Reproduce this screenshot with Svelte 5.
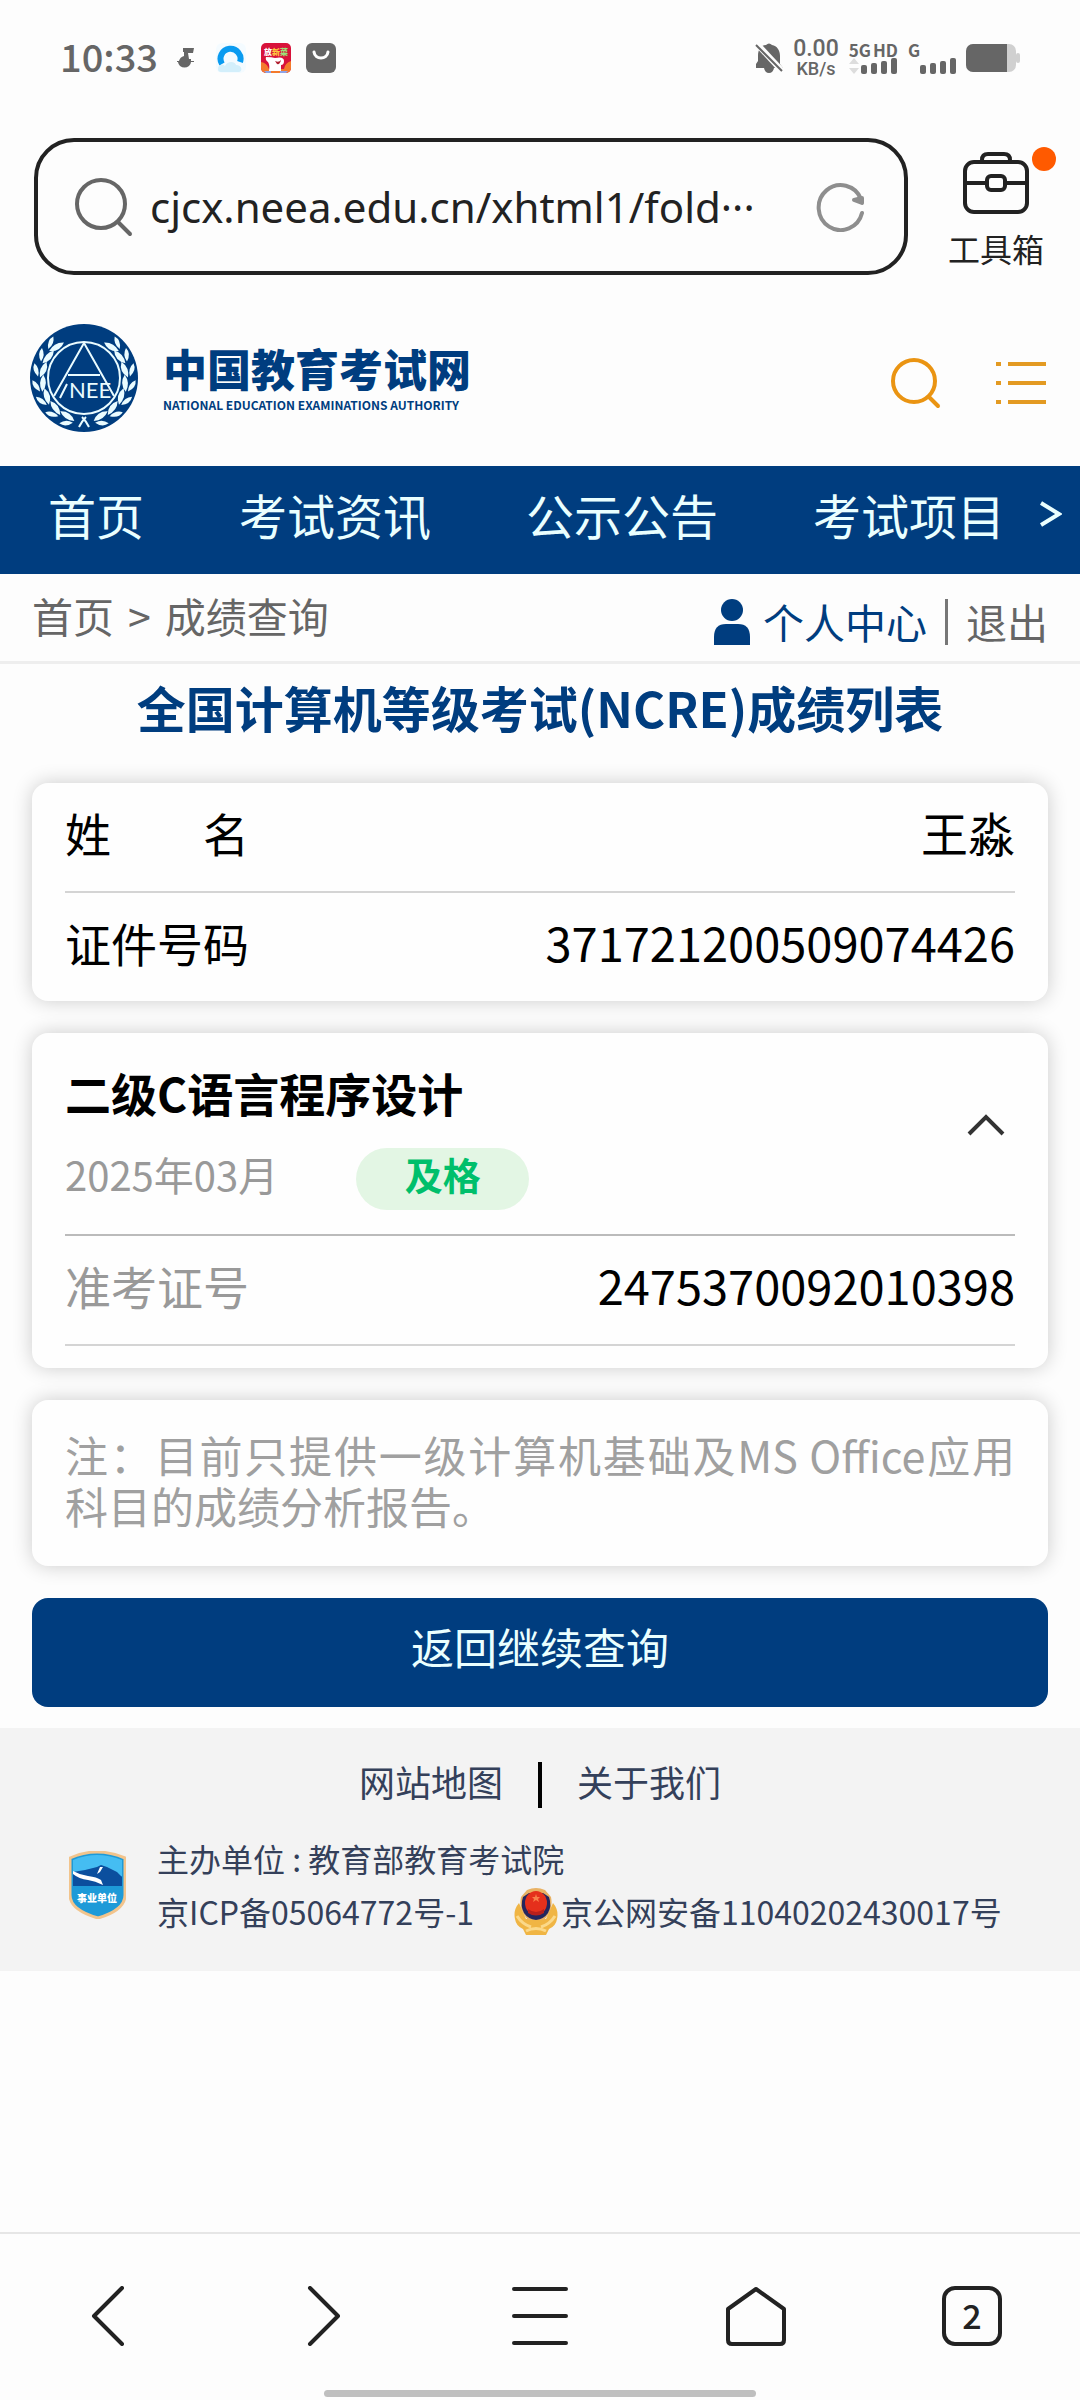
<script>
  let url = $state('cjcx.neea.edu.cn/xhtml1/fold···');
  let open = $state(true);

  const nav = ['首页', '考试资讯', '公示公告', '考试项目'];
  const person = [
    { label: '姓　　名', value: '王淼' },
    { label: '证件号码', value: '371721200509074426' }
  ];
  const exam = {
    name: '二级C语言程序设计',
    date: '2025年03月',
    result: '及格',
    ticket: '2475370092010398'
  };
  const bars = [9, 11, 13, 16];

  // laurel leaves, one angle per pair, measured from the bottom of the emblem
  const leaves = [14, 34, 54, 73, 92, 111, 129];
</script>

{#snippet signal()}
  <svg width="36" height="16" viewBox="0 0 36 16">
    {#each bars as h, i}
      <rect x={i * 10} y={16 - h} width="6" height={h} rx="2" fill="#666" />
    {/each}
  </svg>
{/snippet}

{#snippet laurel()}
  {#each leaves as a}
    <g transform="rotate({a} 54 54)">
      <path d="M55 98 Q49 89 39 92 Q45 100 55 98z" />
      <path d="M54 100 Q46 98 41 104 Q48 107 54 100z" />
    </g>
  {/each}
{/snippet}

<div class="screen">
  <div class="status">
    <div class="status-left">
      <span class="time">10:33</span>
      <svg width="18" height="22" viewBox="0 0 18 22" fill="#666">
        <path d="M6 1h11l-1 5h-5l1 6h2v2h3v1h-3a6 6 0 0 1-2 4 7 6 0 0 1-9 0 7 7 0 0 1-2-4H0v-1h2q1-4 5-5V5H6z" />
      </svg>
      <svg class="browser" width="30" height="30" viewBox="0 0 30 30">
        <rect width="30" height="30" rx="6" fill="#f4fbff" />
        <path d="M6 21a10 10 0 1 1 18-2" fill="none" stroke="#0a9bf0" stroke-width="6" />
        <path d="M2 26c0-5 5-5 7-3 2-5 10-5 11-1 6 0 7 6 3 7H5c-2 0-3-1-3-3z" fill="#d3effb" />
      </svg>
      <svg width="30" height="30" viewBox="0 0 30 30">
        <rect width="30" height="30" rx="5" fill="#d8123a" />
        <path d="M0 19q6 1 8 7h15q1-6 7-8v7a5 5 0 0 1-5 5H5a5 5 0 0 1-5-5z" fill="#f47a2c" />
        <text x="15" y="12" text-anchor="middle" font-size="8" font-weight="900" fill="#fff">放<tspan fill="#ffc83d">新</tspan><tspan fill="#9be27a">菜</tspan></text>
        <path d="M5 14q6 0 9 1 9-2 9 3 0 4-3 4v6H8q1-6-1-9-3-2-2-5z" fill="#fff" />
        <path d="M14 18q4 2 6-1-1 5-4 4z" fill="#b02030" />
        <path d="M3 28h7v2H5zM19 28h8l-2 2h-6z" fill="#8ea4e8" />
      </svg>
      <svg width="30" height="30" viewBox="0 0 30 30">
        <rect width="30" height="30" rx="6" fill="#666" />
        <path d="M8 9c1 8 13 8 14 0" fill="none" stroke="#fff" stroke-width="3" stroke-linecap="round" />
      </svg>
    </div>
    <div class="status-right">
      <svg width="28" height="32" viewBox="0 0 28 32">
        <path d="M3 14C3 6 7 3 11 3q3-3 6 0c5 1 8 5 8 11v8l3 4H19q-1 5-5 5t-5-5H1v-4l2-3z" fill="#666" />
        <path d="M1 1l27 29" stroke="#fdfdfd" stroke-width="6" />
        <path d="M1 3l26 26" stroke="#666" stroke-width="2" />
      </svg>
      <div class="speed"><span>0.00</span><span class="unit">KB/s</span></div>
      <div class="net">
        <div class="net-row labels"><span>5G</span><span>HD</span></div>
        <div class="net-row">
          <svg width="10" height="16" viewBox="0 0 10 16" fill="#ddd"><path d="M5 0l5 6H0zM5 16l5-6H0z" /></svg>
          {@render signal()}
        </div>
      </div>
      <div class="net second"><span>G</span><div class="net-row end">{@render signal()}</div></div>
      <svg width="54" height="28" viewBox="0 0 54 28">
        <rect x="0" y="0" width="50" height="28" rx="7" fill="#d0d0d0" />
        <rect x="50" y="9" width="4" height="10" rx="2" fill="#d0d0d0" />
        <path d="M7 0h34v28H7a7 7 0 0 1-7-7V7a7 7 0 0 1 7-7z" fill="#666" />
      </svg>
    </div>
  </div>

  <div class="toolbar">
    <div class="address">
      <svg width="58" height="60" viewBox="0 0 58 60" fill="none" stroke="#666" stroke-width="4" stroke-linecap="round">
        <circle cx="26" cy="27" r="24" />
        <path d="M43 45l12 12" />
      </svg>
      <input type="text" aria-label="网址" bind:value={url} />
      <button class="plain" aria-label="刷新">
        <svg width="50" height="50" viewBox="0 0 50 50" fill="none" stroke="#8e8e8e" stroke-width="4" stroke-linecap="round" stroke-linejoin="round">
          <path d="M46 31A22 22.500 0 1 1 45 17" />
          <path d="M38 18l8 3V16z" fill="#8e8e8e" />
        </svg>
      </button>
    </div>
    <button class="plain toolbox">
      <span class="toolbox-icon">
        <svg width="66" height="62" viewBox="0 0 66 62" fill="none" stroke="#222" stroke-width="4">
          <path d="M19 10V8q0-6 6-6h16q6 0 6 6v2" />
          <rect x="2" y="10" width="62" height="50" rx="9" />
          <path d="M2 31h21M43 31h21" />
          <rect x="24" y="24" width="18" height="14" rx="4" />
        </svg>
        <i class="dot"></i>
      </span>
      工具箱
    </button>
  </div>

  <header>
    <svg class="emblem" width="108" height="108" viewBox="0 0 108 108">
      <circle cx="54" cy="54" r="54" fill="#003d7f" />
      <g fill="#eafcff">
        {@render laurel()}
        <g transform="matrix(-1 0 0 1 108 0)">{@render laurel()}</g>
      </g>
      <g fill="none" stroke="#eafcff" stroke-width="2">
        <circle cx="54" cy="54" r="36" />
        <path d="M49 103q3-6 7-10M59 103q-3-6-7-10" />
        <path d="M24 72L54 19l30 53M30 74L37 60M38 51h32" />
      </g>
      <text class="initials" x="60" y="74" text-anchor="middle">NEE</text>
    </svg>
    <div class="brand">
      <h1>中国教育考试网</h1>
      <p>NATIONAL EDUCATION EXAMINATIONS AUTHORITY</p>
    </div>
    <button class="plain" aria-label="搜索">
      <svg width="50" height="52" viewBox="0 0 50 52" fill="none" stroke="#ea9412" stroke-width="4" stroke-linecap="round">
        <circle cx="23" cy="24" r="21" />
        <path d="M38 40l9 9" />
      </svg>
    </button>
    <button class="plain" aria-label="菜单">
      <svg width="50" height="44" viewBox="0 0 50 44" stroke="#e39a22" stroke-width="4">
        <path d="M0 3h5M0 22h5M0 41h5M12 3h38M12 22h38M12 41h38" />
      </svg>
    </button>
  </header>

  <nav class="main-nav">
    {#each nav as item}
      <a href="#top">{item}</a>
    {/each}
    <button class="plain" aria-label="更多">
      <svg width="22" height="26" viewBox="0 0 22 26" fill="none" stroke="#eaffff" stroke-width="4"><path d="M1 2l18 11L1 24" /></svg>
    </button>
  </nav>

  <div class="crumbs">
    <div class="path"><a href="#top">首页</a><span>&gt;</span><a href="#top">成绩查询</a></div>
    <div class="user">
      <svg width="36" height="46" viewBox="0 0 36 46" fill="#003d7f">
        <ellipse cx="18" cy="11" rx="11" ry="11" />
        <path d="M0 46V38q0-13 12-13h12q12 0 12 13v8z" />
      </svg>
      <a class="center" href="#top">个人中心</a>
      <i class="bar"></i>
      <a href="#top">退出</a>
    </div>
  </div>

  <main>
    <h2>全国计算机等级考试(NCRE)成绩列表</h2>

    <section class="card person">
      {#each person as row}
        <div class="row"><span>{row.label}</span><span class="value">{row.value}</span></div>
      {/each}
    </section>

    <section class="card exam">
      <div class="exam-head">
        <div>
          <h3>{exam.name}</h3>
          <div class="result"><span class="date">{exam.date}</span><span class="badge">{exam.result}</span></div>
        </div>
        <button class="plain toggle" aria-label="展开" aria-expanded={open} onclick={() => (open = !open)}>
          <svg width="38" height="22" viewBox="0 0 38 22" fill="none" stroke="#333" stroke-width="4"><path d="M2 20L19 3l17 17" /></svg>
        </button>
      </div>
      {#if open}
        <div class="row"><span class="muted">准考证号</span><span class="value">{exam.ticket}</span></div>
      {/if}
    </section>

    <p class="card note">注：目前只提供一级计算机基础及MS Office应用科目的成绩分析报告。</p>

    <button class="back">返回继续查询</button>
  </main>

  <footer>
    <div class="links">
      <a href="#top">网站地图</a>
      <i></i>
      <a href="#top">关于我们</a>
    </div>
    <div class="info">
      <svg width="57" height="68" viewBox="0 0 57 68">
        <path d="M28 1q14 0 28 6v37q0 15-27 23Q1 59 1 44V7Q14 1 28 1z" fill="#1d9ad8" stroke="#f2c48c" stroke-width="3" />
        <path d="M28 4q12 0 25 5v16H4V9q12-5 24-5z" fill="#45bdf2" />
        <path d="M4 21l12-2 12-3 4-2 6 2 10 5 5 5v9H4z" fill="#0b4f9e" />
        <path d="M4 20q7 4 15 5 9 1 13 4l2 5q-8-4-15-5-9-1-15-6zM31 16l-3 7 3-2 3-5z" fill="#fff" />
        <text x="28" y="51" text-anchor="middle" font-size="10" font-weight="900" fill="#fff">事业单位</text>
      </svg>
      <div class="lines">
        <div>主办单位 : 教育部教育考试院</div>
        <div class="records">
          <a href="#top">京ICP备05064772号-1</a>
          <a class="police" href="#top">
            <svg width="44" height="48" viewBox="0 0 44 48">
              <path d="M5 15Q-1 22 1 31q1 7 8 10l3 6h20l3-6q7-3 8-10 2-9-4-16l-7 16H12z" fill="#f0b544" />
              <path d="M3 28q5 8 14 11M41 28q-5 8-14 11M12 43q10-5 20 0" fill="none" stroke="#fbd98a" stroke-width="3" />
              <path d="M13 2q9-4 18 0l6 7q2 10-3 18l-4 5H14l-4-5Q5 19 7 9z" fill="#e9b264" />
              <path d="M9 9q-3 9 1 16 4 6 12 7 8-1 12-7 4-7 1-16l-6-4H15z" fill="#23265e" />
              <ellipse cx="22" cy="15" rx="11" ry="12" fill="#e5301c" />
              <path d="M14 21q8 6 16 0v4q-8 5-16 0z" fill="#b8201c" />
              <path d="M22 6l1 3h3l-2 2 1 3-3-2-3 2 1-3-2-2h3z" fill="#f9804a" />
            </svg>京公网安备11040202430017号</a>
        </div>
      </div>
    </div>
  </footer>

  <div class="browser-nav">
    <div class="tabs">
      <button class="plain" aria-label="后退">
        <svg width="34" height="60" viewBox="0 0 34 60"><path d="M31 2L3 30l28 28" /></svg>
      </button>
      <button class="plain" aria-label="前进">
        <svg width="34" height="60" viewBox="0 0 34 60"><path d="M3 2l28 28L3 58" /></svg>
      </button>
      <button class="plain" aria-label="主菜单">
        <svg width="58" height="60" viewBox="0 0 58 60"><path d="M3 3h52M3 30h52M3 57h52" /></svg>
      </button>
      <button class="plain" aria-label="主页">
        <svg width="60" height="60" viewBox="0 0 60 60"><path d="M30 3L2 23v31q0 4 4 4h48q4 0 4-4V23z" /></svg>
      </button>
      <button class="plain" aria-label="标签页"><span class="count">2</span></button>
    </div>
    <i class="handle"></i>
  </div>
</div>

<style>
  :global(body) {
    background: #fdfdfd;
  }

  .screen {
    min-height: 100vh;
    display: flex;
    flex-direction: column;
    background: #fdfdfd;
    font-family: "Noto Sans CJK SC", sans-serif;
    color: #000;
  }

  svg {
    display: block;
    flex: none;
  }

  a {
    color: inherit;
    text-decoration: none;
  }

  h1, h2, h3, p {
    margin: 0;
  }

  .plain {
    border: 0;
    padding: 0;
    background: none;
    font-family: inherit;
    color: inherit;
  }

  .status {
    height: 116px;
    padding: 0 60px;
    display: flex;
    justify-content: space-between;
    align-items: center;
    color: #666;
  }

  .status-left {
    display: flex;
    align-items: center;
    gap: 15px;
  }

  .time {
    font-size: 38px;
    line-height: 40px;
    font-weight: 500;
    margin-right: 4px;
    padding-bottom: 4px;
  }

  .browser {
    margin-left: 6px;
  }

  .status-right {
    display: flex;
    align-items: center;
    gap: 10px;
  }

  .speed {
    display: flex;
    flex-direction: column;
    align-items: center;
    font-family: "Roboto", sans-serif;
    font-size: 23px;
    line-height: 22px;
    font-weight: 500;
  }

  .unit {
    font-size: 18px;
    line-height: 18px;
  }

  .net {
    display: flex;
    flex-direction: column;
    font-size: 17px;
    line-height: 17px;
    font-weight: 700;
    padding-bottom: 2px;
  }

  .second {
    width: 48px;
  }

  .net-row {
    display: flex;
    gap: 2px;
  }

  .labels {
    justify-content: space-between;
  }

  .end {
    justify-content: flex-end;
  }

  .toolbar {
    display: flex;
    padding: 22px 0 0 34px;
  }

  .address {
    flex: 1;
    min-width: 0;
    height: 137px;
    box-sizing: border-box;
    border: 4px solid #222;
    border-radius: 40px;
    padding: 0 38px 0 37px;
    display: flex;
    align-items: center;
    gap: 17px;
  }

  .address input {
    flex: 1;
    min-width: 0;
    border: 0;
    padding: 0;
    outline: none;
    background: none;
    font-family: "Noto Sans", "Noto Sans CJK SC", sans-serif;
    font-size: 42px;
    color: #222;
  }

  .toolbox {
    width: 172px;
    padding: 0 0 4px 4px;
    display: flex;
    flex-direction: column;
    align-items: center;
    justify-content: flex-end;
    gap: 11px;
    font-size: 32px;
    line-height: 46px;
    color: #222;
  }

  .toolbox-icon {
    position: relative;
  }

  .dot {
    position: absolute;
    top: -5px;
    right: -27px;
    width: 24px;
    height: 24px;
    border-radius: 50%;
    background: #ff5a00;
  }

  header {
    display: flex;
    align-items: center;
    padding: 49px 34px 34px 30px;
    gap: 55px;
  }

  header .plain {
    padding-top: 10px;
  }

  .emblem {
    margin-right: -30px;
  }

  .initials {
    font-family: "Lato", sans-serif;
    font-size: 22px;
    fill: #eafcff;
  }

  .brand {
    flex: 1;
    color: #003d7f;
  }

  .brand h1 {
    font-size: 44px;
    line-height: 54px;
    font-weight: 900;
  }

  .brand p {
    font-size: 12px;
    line-height: 20px;
    font-weight: 700;
  }

  .main-nav {
    height: 108px;
    box-sizing: border-box;
    padding: 0 18px 12px 48px;
    display: flex;
    justify-content: space-between;
    align-items: center;
    background: #003d7f;
    color: #eaffff;
    font-size: 48px;
    line-height: 60px;
  }

  .main-nav a:nth-of-type(4) {
    margin-right: -60px;
  }

  .crumbs {
    height: 90px;
    box-sizing: border-box;
    padding: 0 32px;
    border-bottom: 3px solid #eee;
    display: flex;
    justify-content: space-between;
    align-items: center;
    font-size: 41px;
    line-height: 50px;
    color: #666;
  }

  .path {
    display: flex;
    gap: 14px;
    padding-bottom: 5px;
  }

  .user {
    padding-top: 9px;
    display: flex;
    align-items: center;
    gap: 13px;
  }

  .user a {
    padding-bottom: 3px;
  }

  .center {
    color: #003d7f;
  }

  .bar {
    width: 3px;
    height: 46px;
    margin: 0 5px;
    background: #777;
  }

  main {
    padding: 0 32px;
    display: flex;
    flex-direction: column;
    gap: 32px;
  }

  h2 {
    padding: 13px 0 14px;
    font-size: 49px;
    line-height: 60px;
    text-align: center;
    color: #003d7f;
  }

  .card {
    padding: 0 33px;
    border-radius: 16px;
    background: #fefefe;
    box-shadow: 0 0 20px rgba(0, 0, 0, 0.2);
  }

  .row {
    display: flex;
    justify-content: space-between;
    align-items: center;
    height: 98px;
    padding-bottom: 10px;
    border-bottom: 2px solid #d4d4d4;
    font-size: 46px;
    line-height: 60px;
  }

  .person .row:last-child {
    border-bottom: 0;
  }

  .value {
    font-size: 47px;
  }

  .exam {
    padding-bottom: 22px;
  }

  .exam-head {
    display: flex;
    justify-content: space-between;
    align-items: center;
    padding: 29px 10px 24px 0;
    border-bottom: 2px solid #bbb;
  }

  h3 {
    font-size: 46px;
    line-height: 60px;
  }

  .result {
    display: flex;
    align-items: center;
    gap: 78px;
    margin-top: 26px;
    font-size: 40px;
    line-height: 52px;
    color: #999;
  }

  .date {
    padding-bottom: 10px;
  }

  .badge {
    width: 173px;
    padding-bottom: 10px;
    border-radius: 31px;
    text-align: center;
    font-size: 38px;
    font-weight: 700;
    color: #00bf6b;
    background: #e3f6e4;
  }

  .toggle {
    padding-bottom: 22px;
  }

  .muted {
    color: #999;
  }

  .note {
    padding-top: 29px;
    padding-bottom: 35px;
    font-size: 43px;
    line-height: 51px;
    text-align: justify;
    color: #a0a0a0;
  }

  .back {
    height: 109px;
    border: 0;
    border-radius: 16px;
    padding: 0 0 14px;
    background: #003d7f;
    color: #eaffff;
    font-family: inherit;
    font-size: 43px;
  }

  footer {
    margin-top: 21px;
    padding: 34px 32px 33px;
    background: #f3f3f3;
    color: #34405a;
  }

  .links {
    display: flex;
    justify-content: center;
    align-items: center;
    gap: 35px;
    font-size: 36px;
    line-height: 38px;
  }

  .links a {
    padding-bottom: 8px;
  }

  .links i {
    width: 4px;
    height: 46px;
    background: #000;
  }

  .info {
    display: flex;
    align-items: center;
    gap: 31px;
    margin-top: 24px;
    padding-left: 37px;
    font-size: 32px;
    line-height: 53px;
    white-space: nowrap;
  }

  .records {
    display: flex;
    gap: 40px;
  }

  .police {
    display: flex;
    align-items: center;
    gap: 3px;
  }

  .browser-nav {
    margin-top: auto;
    border-top: 2px solid #e6e6e6;
    padding: 8px 0 3px;
  }

  .tabs {
    display: grid;
    grid-template-columns: repeat(5, 1fr);
    height: 148px;
  }

  .tabs button {
    display: flex;
    justify-content: center;
    align-items: center;
  }

  .tabs svg {
    fill: none;
    stroke: #222;
    stroke-width: 4;
    stroke-linecap: round;
    stroke-linejoin: round;
  }

  .count {
    width: 52px;
    height: 52px;
    border: 4px solid #222;
    border-radius: 13px;
    font-size: 34px;
    line-height: 50px;
    font-weight: 500;
    text-align: center;
    color: #222;
  }

  .handle {
    display: block;
    width: 40%;
    height: 7px;
    margin: 0 auto;
    border-radius: 4px;
    background: #bfbfbf;
  }
</style>
